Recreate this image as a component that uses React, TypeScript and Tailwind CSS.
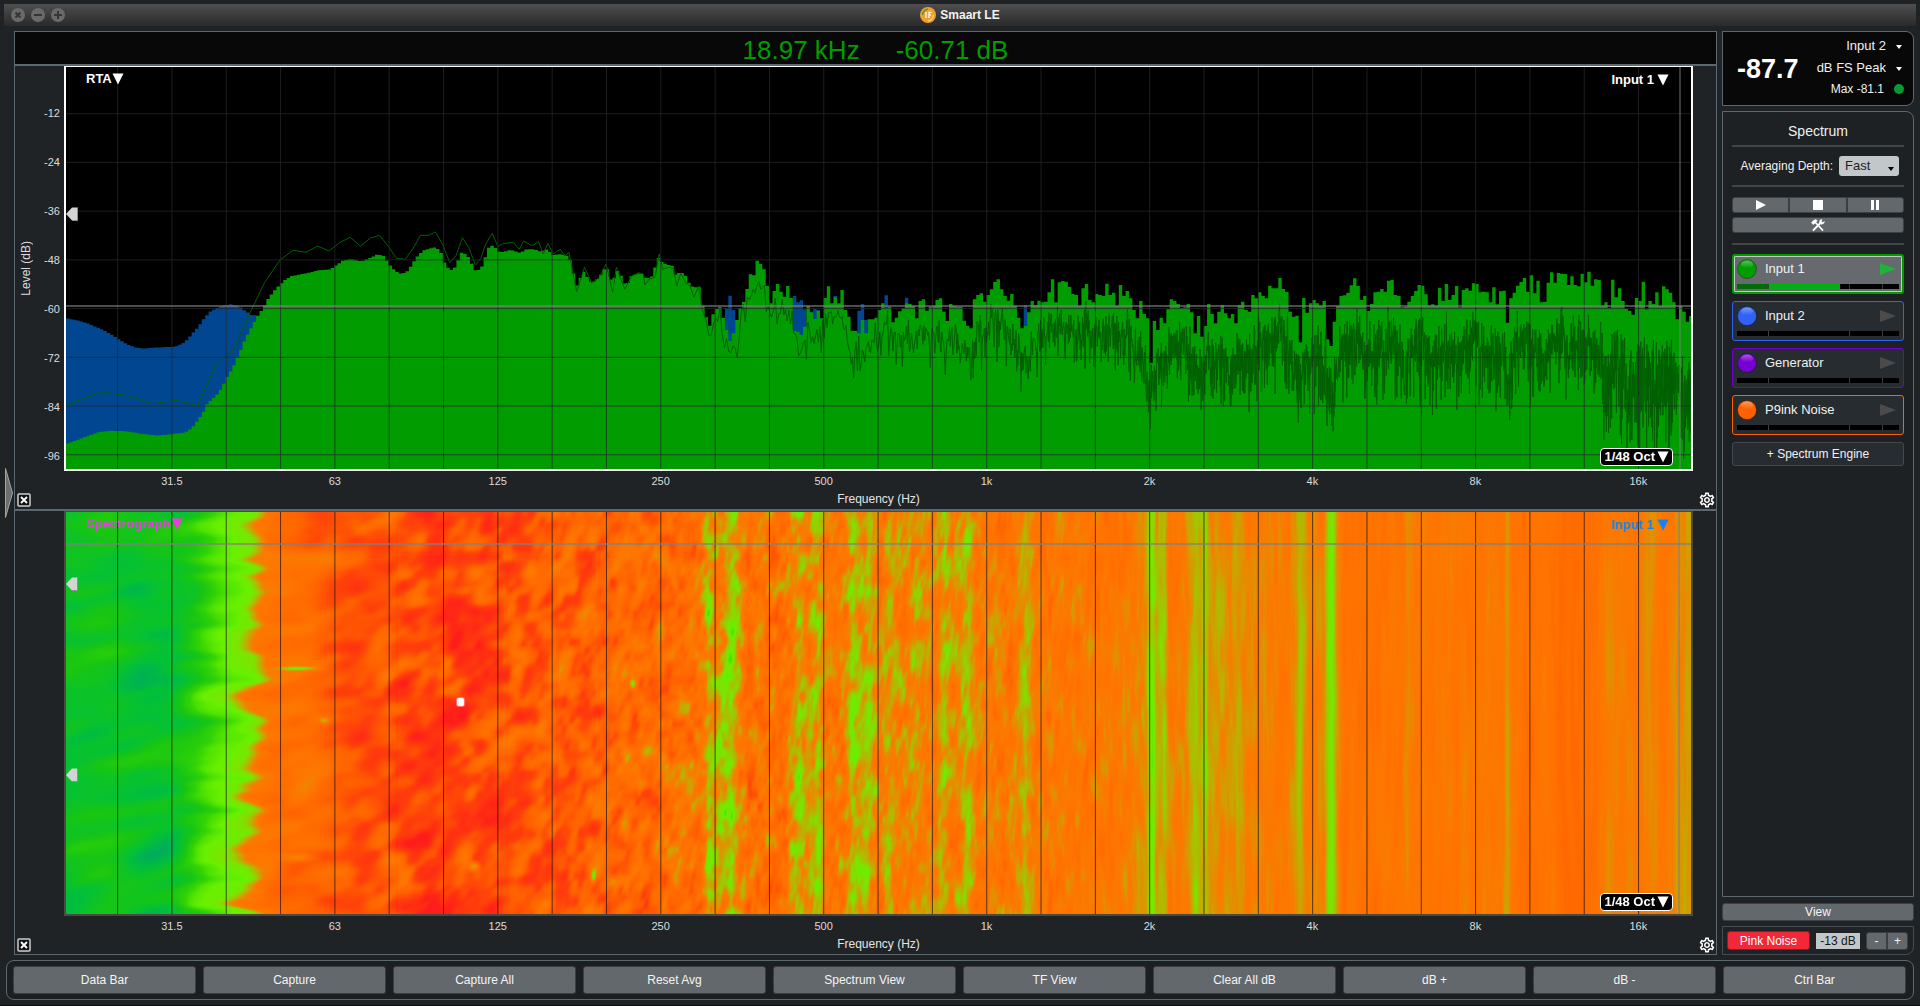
import { useEffect, useMemo, useRef } from "react";
import type { ReactNode } from "react";
import { MdOutlineSettings } from "react-icons/md";

const PLOT_W = 1625;
const PLOT_H = 402;
const BAR_W = 3.395;

type Point = [number, number];

/* ---------- spectrum data, in plot units (x 0..1625, y 0..402) ---------- */

const lowX = (v: number) => v / 2.45 - 66;
const levelY = (v: number) => v / 3 + 173;

const GREEN_LOW: Point[] = [
  [163, 612], [190, 600], [215, 588], [240, 577], [270, 572], [310, 574], [345, 581], [385, 587], [420, 583], [455, 577],
  [470, 565], [485, 540], [497, 520], [505, 495], [520, 478], [535, 460], [545, 440], [555, 415], [570, 385], [585, 345],
  [600, 300], [615, 265], [630, 230], [645, 205], [655, 180], [670, 155], [685, 135], [700, 118], [715, 108], [750, 100],
  [780, 91], [810, 88], [825, 75], [840, 62], [860, 57], [885, 64], [905, 55], [925, 43], [940, 48], [948, 62],
  [958, 80], [970, 95], [985, 102], [1000, 92], [1012, 68], [1025, 45], [1040, 30], [1065, 22], [1078, 30], [1090, 70],
  [1100, 88], [1110, 92], [1120, 68], [1130, 38], [1145, 45], [1155, 70], [1165, 93], [1178, 88], [1187, 60], [1195, 25],
  [1207, 16], [1215, 25], [1225, 38], [1250, 30], [1275, 38], [1290, 28], [1310, 28], [1325, 35], [1340, 28], [1355, 45],
  [1375, 42], [1395, 50], [1403, 90], [1413, 138], [1425, 105], [1432, 92], [1440, 115], [1450, 130], [1468, 112], [1485, 78],
  [1492, 98], [1501, 138], [1508, 95], [1517, 92], [1525, 118], [1534, 140], [1546, 108], [1565, 100], [1575, 103], [1582, 118],
  [1600, 107], [1607, 72], [1615, 48], [1623, 70], [1636, 74], [1650, 78], [1655, 105], [1664, 98], [1678, 100], [1683, 122],
  [1697, 140], [1711, 143], [1717, 138],
];

const BLUE_LOW: Point[] = [
  [163, 235], [185, 240], [210, 248], [250, 268], [275, 285], [290, 297], [310, 312], [330, 322], [350, 326], [375, 323],
  [430, 320], [445, 312], [460, 298], [475, 275], [485, 262], [500, 235], [515, 215], [530, 205], [545, 197], [565, 193],
  [585, 198], [600, 212], [615, 225], [640, 228],
];

const TRACE_LOW: Point[] = [
  [163, 495], [248, 455], [315, 467], [375, 491], [432, 481], [484, 497], [528, 377], [573, 327], [610, 225], [648, 128],
  [686, 60], [718, 31], [750, 37], [778, 18], [806, 33], [832, 8], [858, -8], [883, 18], [908, -6], [930, -14],
  [952, 20], [971, 55], [993, 58], [1012, 25], [1030, -14], [1050, -14], [1067, -24], [1085, 15], [1102, 68], [1117, 48],
  [1133, -7], [1148, 22], [1165, 75], [1178, 55], [1190, 12], [1206, -20], [1220, 20], [1232, 11], [1258, 7], [1272, 28],
  [1283, 3], [1300, 15], [1308, 15], [1319, 4], [1331, 42], [1342, 10], [1355, 42], [1373, 28], [1384, 48], [1394, 37],
  [1403, 95], [1413, 155], [1432, 82], [1450, 130], [1468, 112], [1485, 72], [1501, 157], [1510, 82], [1531, 148], [1548, 108],
  [1565, 98], [1576, 102], [1580, 135], [1590, 118], [1605, 112], [1615, 42], [1624, 88], [1638, 82], [1650, 85], [1658, 138],
  [1668, 100], [1680, 128], [1690, 135], [1700, 172], [1712, 138], [1720, 205], [1729, 238],
];

const HIGH_START = 635.2;
const GREEN_HIGH = [
  198, 232, 257, 223, 207, 201, 234, 270, 303, 280, 240, 204, 186, 147, 103, 106, 62, 72, 88, 138, 190, 153, 132, 155, 170,
  138, 174, 273, 276, 284, 260, 198, 217, 237, 212, 235, 174, 139, 190, 172, 190, 150, 210, 230, 272, 273, 280, 240, 280,
  238, 238, 233, 210, 190, 205, 200, 247, 233, 214, 205, 190, 192, 198, 235, 183, 178, 212, 200, 198, 180, 175, 215, 243,
  192, 198, 200, 200, 242, 257, 265, 178, 165, 160, 185, 165, 148, 126, 118, 148, 168, 182, 162, 198, 233, 265, 258, 217,
  183, 195, 182, 187, 185, 157, 118, 187, 127, 123, 125, 140, 162, 165, 198, 145, 132, 180, 187, 162, 165, 168, 131, 165,
  158, 198, 135, 168, 153, 175, 210, 235, 183, 222, 235, 368,
  243, 270, 233, 250, 208, 178, 183, 192, 204, 202, 192, 217, 280, 228, 290, 258, 192, 222, 250, 215, 195, 220, 235, 222,
  250, 196, 185, 210, 215, 165, 175, 157, 168, 175, 137, 145, 145, 114, 147, 156, 215, 230, 227, 307, 174, 218, 190, 180,
  190, 198, 183, 298, 318, 245, 198, 168, 166, 158, 136, 115, 138, 180, 168, 213, 192, 157, 155, 147, 155, 122, 120, 165,
  168, 202, 200, 185, 168, 153, 135, 137, 163, 197, 193, 198, 143, 183, 132, 180, 165, 138, 202, 150, 145, 152, 130, 132,
  157, 155, 157, 187, 142, 193, 154, 152, 248, 175, 158, 137, 126, 114, 155, 106, 160, 122, 187, 185, 128, 97, 128, 99,
  101, 102, 135, 109, 135, 139, 101, 127, 95, 137, 118, 120, 197, 187, 203, 119, 172, 145, 183, 207, 212, 224, 174, 183,
  125, 208, 183, 192, 157, 198, 139, 148, 158, 187, 238, 198, 215, 245, 228,
];

/* bar index within GREEN_HIGH -> level of the second input behind it */
const BLUE_HIGH: Point[] = [
  [7, 205], [8, 167], [9, 210], [27, 168], [28, 187], [29, 181], [30, 208], [32, 217], [33, 207], [34, 210], [39, 168],
  [46, 212], [47, 192], [48, 240], [54, 166], [60, 173], [95, 195],
];

function sample(points: Point[], x: number): number {
  if (x <= points[0][0]) return points[0][1];
  for (let i = 1; i < points.length; i++) {
    const [x1, y1] = points[i];
    if (x <= x1) {
      const [x0, y0] = points[i - 1];
      return y0 + ((y1 - y0) * (x - x0)) / (x1 - x0);
    }
  }
  return points[points.length - 1][1];
}

function makeRandom(seed: number) {
  let s = seed;
  return () => {
    s = (s * 1664525 + 1013904223) >>> 0;
    return (s + 0.5) / 4294967296;
  };
}

function steps(points: Point[], from: number, to: number): string {
  let d = "";
  for (let x = from; x < to - 0.5; x += BAR_W) {
    const y = levelY(sample(points, (x + BAR_W / 2 + 66) * 2.45));
    d += `V${y.toFixed(1)}H${Math.min(x + BAR_W, to).toFixed(2)}`;
  }
  return d;
}

function buildSpectrum() {
  let green = `M0 ${PLOT_H}` + steps(GREEN_LOW, 0, HIGH_START);
  GREEN_HIGH.forEach((v, i) => {
    green += `V${levelY(v).toFixed(1)}H${(HIGH_START + (i + 1) * BAR_W).toFixed(2)}`;
  });
  green += `H${PLOT_W}V${PLOT_H}Z`;

  let blue = `M0 ${PLOT_H}` + steps(BLUE_LOW, 0, 192) + `V${PLOT_H}Z`;
  for (const [i, v] of BLUE_HIGH) {
    const x = HIGH_START + i * BAR_W;
    blue += `M${x.toFixed(2)} ${PLOT_H}V${levelY(v).toFixed(1)}h${BAR_W}V${PLOT_H}Z`;
  }

  const random = makeRandom(48);
  let trace = TRACE_LOW.map(([x, y], i) => `${i ? "L" : "M"}${lowX(x).toFixed(1)} ${levelY(y).toFixed(1)}`).join("");
  let x = HIGH_START + 5;
  while (x < PLOT_W) {
    const bar = (x - HIGH_START) / BAR_W;
    const i = Math.min(GREEN_HIGH.length - 2, Math.max(1, Math.floor(bar)));
    const top = (GREEN_HIGH[i - 1] + 2 * GREEN_HIGH[i] + GREEN_HIGH[i + 1]) / 4;
    const t = (x - HIGH_START) / (PLOT_W - HIGH_START);
    const offset = 6 + 168 * Math.pow(t, 0.66) + (x > 1535 ? 30 : 0);
    const spread = 1.8 + 1.9 * Math.min(1, t * 1.5) + (x > 1535 ? 1.4 : 0);
    const db = -10 * Math.log10(-Math.log(random()) + 0.02);
    const y = Math.min(392, levelY(top + offset + (db + 1.5) * -1 * spread * -3.2));
    trace += `L${x.toFixed(2)} ${Math.max(levelY(GREEN_HIGH[i]) + 2, y).toFixed(1)}`;
    x += Math.max(0.28, 2.4 * Math.pow(0.5, (x - HIGH_START) / 163));
  }
  return { green, blue, trace };
}

const GRID_X = Array.from({ length: 29 }, (_, i) => 51.6 + i * 54.32);
const GRID_Y = Array.from({ length: 8 }, (_, i) => 46.7 + i * 48.72);

function SpectrumChart() {
  const { green, blue, trace } = useMemo(buildSpectrum, []);
  return (
    <svg viewBox={`0 0 ${PLOT_W} ${PLOT_H}`} preserveAspectRatio="none" className="absolute inset-0 block h-full w-full bg-black">
      <path d={blue} fill="#004690" />
      <path d={green} fill="#009c00" />
      <path d={trace} fill="none" stroke="#006000" strokeWidth="1" strokeLinejoin="bevel" />
      <g stroke="#26282e" strokeOpacity="0.72">
        {GRID_X.map((x) => <line key={x} x1={x} x2={x} y1="0" y2={PLOT_H} />)}
        {GRID_Y.map((y) => <line key={y} x1="0" x2={PLOT_W} y1={y} y2={y} />)}
      </g>
      <path d={`M0 239H${PLOT_W}`} stroke="#808080" strokeOpacity="0.6" strokeWidth="2" />
      <path d={`M1614 0V${PLOT_H}`} stroke="#808080" strokeOpacity="0.6" strokeWidth="1.5" />
    </svg>
  );
}

/* ---------- spectrograph ---------- */

const COLUMN_LEVEL: Point[] = [
  [66, 0.15], [110, 0.17], [140, 0.14], [172, 0.15], [188, 0.22], [205, 0.34], [218, 0.39], [230, 0.41], [242, 0.44], [250, 0.53],
  [258, 0.62], [280, 0.67], [340, 0.73], [390, 0.77], [430, 0.88], [455, 0.82], [500, 0.81], [560, 0.74], [620, 0.69],
  [680, 0.67], [700, 0.62], [708, 0.51], [715, 0.57], [722, 0.52], [731, 0.46], [738, 0.55], [748, 0.66], [785, 0.64],
  [793, 0.54], [798, 0.5], [808, 0.56], [818, 0.5], [825, 0.62], [844, 0.61], [852, 0.48], [860, 0.54], [868, 0.5],
  [880, 0.6], [888, 0.54], [896, 0.59], [925, 0.59], [933, 0.61], [944, 0.52], [952, 0.6], [962, 0.54], [969, 0.5],
  [976, 0.61], [1012, 0.62], [1020, 0.57], [1025, 0.5], [1030, 0.55], [1036, 0.62], [1130, 0.61], [1146, 0.54],
  [1150, 0.44], [1153, 0.44], [1156, 0.53], [1164, 0.51], [1169, 0.6], [1186, 0.59], [1195, 0.51], [1200, 0.54],
  [1205, 0.47], [1209, 0.55], [1222, 0.56], [1236, 0.54], [1250, 0.59], [1284, 0.61], [1294, 0.56], [1299, 0.49],
  [1302, 0.52], [1308, 0.59], [1323, 0.6], [1328, 0.45], [1332, 0.44], [1337, 0.58], [1344, 0.64], [1400, 0.63],
  [1406, 0.59], [1420, 0.63], [1460, 0.61], [1502, 0.61], [1507, 0.53], [1512, 0.63], [1530, 0.66], [1545, 0.62],
  [1560, 0.68], [1595, 0.66], [1605, 0.59], [1625, 0.59], [1634, 0.62], [1650, 0.58], [1665, 0.62], [1678, 0.57], [1691, 0.53],
];

const CELL_WIDTH: Point[] = [[66, 46], [230, 36], [400, 19], [560, 11], [750, 6], [1000, 5], [1300, 4], [1691, 4]];
const CELL_HEIGHT: Point[] = [[66, 16], [230, 15], [400, 15], [700, 14], [1000, 18], [1120, 30], [1300, 60], [1691, 90]];
const FINE_DETAIL: Point[] = [[66, 0.15], [300, 0.25], [500, 0.4], [700, 0.5], [1691, 0.5]];
const NOISE_DEPTH: Point[] = [[66, 0.17], [180, 0.16], [215, 0.06], [250, 0.08], [290, 0.16], [420, 0.32], [620, 0.23], [710, 0.2], [1000, 0.14], [1130, 0.09], [1250, 0.07], [1691, 0.05]];

const SPOTS = [
  { x: 298, y: 156, rx: 18, ry: 2, v: -0.22 },
  { x: 474, y: 354, rx: 6, ry: 5, v: -0.32 },
  { x: 298, y: 345, rx: 16, ry: 4, v: -0.17 },
  { x: 593, y: 364, rx: 3, ry: 7, v: -0.26 },
  { x: 632, y: 171, rx: 3, ry: 5, v: -0.26 },
  { x: 324, y: 208, rx: 5, ry: 3, v: -0.15 },
];

const PALETTE: [number, number, number, number][] = [
  [0, 0, 168, 100], [0.1, 2, 192, 56], [0.2, 24, 198, 18], [0.3, 52, 212, 4], [0.4, 104, 240, 0], [0.45, 126, 226, 0],
  [0.52, 188, 176, 0], [0.59, 248, 124, 0], [0.63, 255, 116, 0], [0.73, 255, 98, 0], [0.83, 255, 64, 10], [1, 255, 28, 26],
];

function hash(ix: number, iy: number): number {
  let h = (ix * 374761393 + iy * 668265263) | 0;
  h = Math.imul(h ^ (h >>> 13), 1274126177);
  return ((h ^ (h >>> 16)) >>> 0) / 4294967296;
}

function noise(x: number, y: number): number {
  const ix = Math.floor(x);
  const iy = Math.floor(y);
  const fx = x - ix;
  const fy = y - iy;
  const sx = fx * fx * (3 - 2 * fx);
  const sy = fy * fy * (3 - 2 * fy);
  const a = hash(ix, iy) * (1 - sx) + hash(ix + 1, iy) * sx;
  const b = hash(ix, iy + 1) * (1 - sx) + hash(ix + 1, iy + 1) * sx;
  return a * (1 - sy) + b * sy - 0.5;
}

function paintSpectrograph(canvas: HTMLCanvasElement) {
  const ctx = canvas.getContext("2d");
  if (!ctx) return;
  const image = ctx.createImageData(PLOT_W, PLOT_H);
  let u = 0;
  for (let px = 0; px < PLOT_W; px++) {
    const gx = px + 66;
    u += 1 / sample(CELL_WIDTH, gx);
    const ch = sample(CELL_HEIGHT, gx);
    const depth = sample(NOISE_DEPTH, gx);
    const fine = sample(FINE_DETAIL, gx);
    const edge = gx > 160 && gx < 310 ? Math.sin(((gx - 160) / 150) * Math.PI) : 0;
    const bumpy = gx < 1100;
    for (let y = 0; y < PLOT_H; y++) {
      const drift = gx / 300;
      const shift = edge ? (noise(3.5 + drift, y / 15) * 40 + noise(9.5 + drift, y / 8) * 26) * edge : 0;
      const base = edge ? sample(COLUMN_LEVEL, gx + shift) : sample(COLUMN_LEVEL, gx);
      const slant = bumpy ? y * 0.02 : 0;
      const n =
        noise(u + slant, y / ch + 40) * 0.75 +
        noise(u * 1.9 + slant * 2 + 31, y / (ch * 0.6) + 90) * fine +
        noise(u * 0.5 + 77, y / (ch * 1.7) + 12) * 0.6;
      let v = base + n * depth * 1.15;
      if (bumpy) {
        for (const s of SPOTS) {
          const dx = (px + 66 - s.x) / s.rx;
          const dy = (y - s.y) / s.ry;
          const r = dx * dx + dy * dy;
          if (r < 6) v += s.v * Math.exp(-r);
        }
      }
      v = Math.max(0, Math.min(0.999, v));
      let k = 1;
      while (PALETTE[k][0] < v) k++;
      const p = PALETTE[k - 1];
      const q = PALETTE[k];
      const t = (v - p[0]) / (q[0] - p[0]);
      const o = (y * PLOT_W + px) * 4;
      image.data[o] = p[1] + (q[1] - p[1]) * t;
      image.data[o + 1] = p[2] + (q[2] - p[2]) * t;
      image.data[o + 2] = p[3] + (q[3] - p[3]) * t;
      image.data[o + 3] = 255;
    }
  }
  ctx.putImageData(image, 0, 0);
}

function SpectrographChart() {
  const ref = useRef<HTMLCanvasElement>(null);
  useEffect(() => {
    if (ref.current) paintSpectrograph(ref.current);
  }, []);
  return (
    <>
      <canvas ref={ref} width={PLOT_W} height={PLOT_H} className="absolute inset-0 block h-full w-full bg-[#ff7800]" />
      <svg viewBox={`0 0 ${PLOT_W} ${PLOT_H}`} preserveAspectRatio="none" className="absolute inset-0 block h-full w-full">
        <rect x="390" y="185" width="9" height="10" rx="3" fill="#ff7070" />
        <rect x="391" y="186" width="7" height="8" rx="2" fill="#ffffff" />
        <g stroke="#1c1408" strokeOpacity="0.72">
          {GRID_X.map((x) => <line key={x} x1={x} x2={x} y1="0" y2={PLOT_H} />)}
        </g>
        <path d={`M0 32H${PLOT_W}`} stroke="#808080" strokeOpacity="0.7" strokeWidth="2" />
        <path d={`M1613 0V${PLOT_H}`} stroke="#808080" strokeOpacity="0.7" strokeWidth="1.5" />
      </svg>
    </>
  );
}

/* ---------- plot panels ---------- */

const FREQS = ["31.5", "63", "125", "250", "500", "1k", "2k", "4k", "8k", "16k"];
const LEVELS = ["-12", "-24", "-36", "-48", "-60", "-72", "-84", "-96"];

function Down() {
  return (
    <svg viewBox="0 0 12 12" className="size-3">
      <path d="M0.5 0.5H11.5L6 11.5Z" fill="currentColor" />
    </svg>
  );
}

function Handle({ label, className }: { label: string; className: string }) {
  return (
    <button type="button" aria-label={label} className={`absolute left-0 h-[14px] w-3 -translate-y-1/2 ${className}`}>
      <svg viewBox="0 0 12 14" className="block h-full w-full">
        <path d="M0 7L6 0.5H11.5V13.5H6Z" fill="#d4d4d4" />
        <path d="M11.5 0.5V13.5H6" fill="none" stroke="#8f8f8f" />
      </svg>
    </button>
  );
}

interface PlotProps {
  name: string;
  frameClass: string;
  nameClass: string;
  inputClass: string;
  levels: boolean;
  handles: ReactNode;
  children: ReactNode;
}

function PlotPanel({ name, frameClass, nameClass, inputClass, levels, handles, children }: PlotProps) {
  return (
    <section aria-label={name} className="flex min-h-0 flex-1 flex-col">
      <div className="flex min-h-0 flex-1">
        <div className="flex w-[49px] shrink-0 text-[11px] text-[#dcdcdc]">
          {levels && (
            <>
              <div className="flex w-[21px] items-center justify-center text-xs">
                <span className="rotate-180 whitespace-nowrap [writing-mode:vertical-rl]">Level (dB)</span>
              </div>
              <div className="flex flex-1 flex-col pr-1">
                <div className="h-[5.5%] shrink-0" />
                {LEVELS.map((l) => (
                  <div key={l} className="flex h-[12.1%] shrink-0 items-center justify-end">{l}</div>
                ))}
              </div>
            </>
          )}
        </div>
        <div className={`relative min-w-0 flex-1 border-2 border-t ${frameClass}`}>
          {children}
          <button type="button" className={`absolute left-5 top-1 flex h-4 items-center text-[13px] font-bold ${nameClass}`}>
            {name}
            <Down />
          </button>
          <button type="button" className={`absolute right-[22px] top-[5px] flex h-4 items-center gap-[3px] text-[13px] font-bold ${inputClass}`}>
            Input 1
            <Down />
          </button>
          <button type="button" className="absolute bottom-[3px] right-[18px] flex h-[18px] items-center gap-[2px] rounded border border-white bg-black px-[3px] text-[13px] font-bold text-white">
            1/48 Oct
            <Down />
          </button>
          {handles}
        </div>
        <div className="w-[23px] shrink-0" />
      </div>
      <div className="relative h-[38px] shrink-0 pl-[51px] pr-[25px]">
        <div className="ml-[1.5%] flex h-5 items-center text-[11px] text-[#dcdcdc]">
          {FREQS.map((f) => (
            <span key={f} className="w-[10.18%] shrink-0 text-center">{f}</span>
          ))}
        </div>
        <div className="text-center text-xs leading-4 text-[#e4e4e4]">Frequency (Hz)</div>
        <button type="button" aria-label="Close plot" className="absolute bottom-[2px] left-[2px] size-[14px]">
          <svg viewBox="0 0 14 14" className="block size-full">
            <rect x="1" y="1" width="12" height="12" rx="1" fill="#101213" stroke="#d0d0d0" strokeWidth="1.5" />
            <path d="M4 4L10 10M10 4L4 10" stroke="#ffffff" strokeWidth="1.8" />
          </svg>
        </button>
        <button type="button" aria-label="Plot settings" className="absolute bottom-0 right-0 text-white">
          <MdOutlineSettings size={18} />
        </button>
      </div>
    </section>
  );
}

/* ---------- side bar ---------- */

const BUTTON = "border border-[#3b4045] bg-[#63686d] text-[#f4f4f4]";

function Caret({ className }: { className: string }) {
  return (
    <svg viewBox="0 0 6 4" className={`pointer-events-none h-1 w-[6px] ${className}`}>
      <path d="M0 0H6L3 4Z" fill="currentColor" />
    </svg>
  );
}

function MeterSelect({ label, value }: { label: string; value: string }) {
  return (
    <div className="relative flex items-center">
      <select aria-label={label} defaultValue={value} className="h-[18px] w-[100px] appearance-none bg-transparent pr-[18px] text-[13px] text-[#f0f0f0] [text-align-last:right]">
        <option>{value}</option>
      </select>
      <Caret className="absolute right-[2px] top-[9px] text-white" />
    </div>
  );
}

interface Engine {
  name: string;
  color: string;
  card: string;
  play: string;
  active: boolean;
}

const ENGINES: Engine[] = [
  { name: "Input 1", color: "#009c00", card: "border-2 border-[#009c00] bg-[#66696d] p-[3px] shadow-[inset_0_0_0_1px_#c4c8c8]", play: "#1db437", active: true },
  { name: "Input 2", color: "#2f62f5", card: "border border-[#2f62f5] bg-[#272c30] p-1", play: "#4b4b4b", active: false },
  { name: "Generator", color: "#7600d0", card: "border border-[#7600d0] bg-[#272c30] p-1", play: "#4b4b4b", active: false },
  { name: "P9ink Noise", color: "#ff6000", card: "border border-[#ff6000] bg-[#272c30] p-1", play: "#4b4b4b", active: false },
];

function EngineCard({ engine, index }: { engine: Engine; index: number }) {
  return (
    <button type="button" className={`flex h-10 w-full flex-col rounded-[3px] text-left ${engine.card}`}>
      <span className="flex h-5 w-full items-center">
        <svg viewBox="0 0 20 20" className="size-5 shrink-0">
          <defs>
            <linearGradient id={`shine-${index}`} x1="0" y1="0" x2="0" y2="1">
              <stop offset="0" stopColor="#ffffff" stopOpacity="0.35" />
              <stop offset="1" stopColor="#ffffff" stopOpacity="0" />
            </linearGradient>
          </defs>
          <circle cx="10" cy="10" r="9.5" fill={engine.color} stroke="#000000" strokeOpacity="0.3" />
          <ellipse cx="10" cy="5.5" rx="6" ry="4" fill={`url(#shine-${index})`} />
        </svg>
        <span className="flex-1 pl-2 text-[13px] text-[#f0f0f0]">{engine.name}</span>
        <svg viewBox="0 0 16 12" className="mr-[3px] h-3 w-4">
          <path d="M0 0L16 6L0 12Z" fill={engine.play} />
        </svg>
      </span>
      <span className="mt-[5px] flex h-[5px] w-full bg-black">
        <span className={`h-full w-1/5 border-r border-[#3a3f42] ${engine.active ? "bg-[#006a06]" : ""}`} />
        <span className="flex h-full w-1/2 border-r border-[#3a3f42]">
          {engine.active && <span className="h-full w-[88%] bg-[#00b010]" />}
        </span>
        <span className="h-full w-1/5 border-r border-[#3a3f42]" />
      </span>
    </button>
  );
}

function Rule() {
  return <div className="h-[2px] shrink-0 bg-[#3f464b]" />;
}

function SideBar() {
  return (
    <aside className="flex w-48 shrink-0 flex-col">
      <div className="flex h-[75px] shrink-0 items-center justify-between rounded-r-lg border border-[#5c6870] bg-[#080808] pl-[14px] pr-[9px]">
        <div className="pt-[2px] text-[27px] font-bold leading-none text-white">-87.7</div>
        <div className="flex flex-col items-end gap-1 pb-[3px]">
          <MeterSelect label="Meter input" value="Input 2" />
          <MeterSelect label="Meter scale" value="dB FS Peak" />
          <div className="flex h-[18px] items-center gap-[10px] text-xs text-[#f0f0f0]">
            Max -81.1
            <span className="size-[10px] rounded-full bg-[#059a34]" />
          </div>
        </div>
      </div>

      <div className="mt-[5px] flex min-h-0 flex-1 flex-col rounded-tr-lg border border-[#5c6870] bg-[#1d2124] px-[9px]">
        <h2 className="flex h-[33px] shrink-0 items-center justify-center pt-[5px] text-sm text-[#f0f0f0]">Spectrum</h2>
        <Rule />
        <div className="flex h-[38px] shrink-0 items-center justify-end gap-[6px] pr-[5px]">
          <label htmlFor="avg-depth" className="text-xs text-[#f0f0f0]">Averaging Depth:</label>
          <div className="relative flex">
            <select id="avg-depth" defaultValue="Fast" className="h-5 w-[60px] appearance-none rounded-[3px] bg-[#c2c8c9] px-[6px] text-[13px] text-[#1b1f22]">
              <option>Fast</option>
            </select>
            <Caret className="absolute right-[5px] top-[11px] text-black" />
          </div>
        </div>
        <Rule />
        <div className="mt-[10px] flex shrink-0">
          <button type="button" aria-label="Play" className={`flex h-4 flex-1 items-center justify-center rounded-l-[3px] ${BUTTON}`}>
            <svg viewBox="0 0 10 10" className="size-[10px]"><path d="M0 0L10 5L0 10Z" fill="#fff" /></svg>
          </button>
          <button type="button" aria-label="Stop" className={`flex h-4 flex-1 items-center justify-center ${BUTTON}`}>
            <svg viewBox="0 0 10 10" className="size-[10px]"><path d="M0 0H10V10H0Z" fill="#fff" /></svg>
          </button>
          <button type="button" aria-label="Pause" className={`flex h-4 flex-1 items-center justify-center rounded-r-[3px] ${BUTTON}`}>
            <svg viewBox="0 0 10 10" className="size-[10px]"><path d="M1 0H4V10H1ZM6 0H9V10H6Z" fill="#fff" /></svg>
          </button>
        </div>
        <button type="button" aria-label="Spectrum options" className={`mb-[10px] mt-1 flex h-4 shrink-0 items-center justify-center rounded-[3px] ${BUTTON}`}>
          <svg viewBox="0 0 28 24" className="h-3 w-[14px]" fill="none" stroke="#ffffff">
            <path d="M8 6L23 22" strokeWidth="3.6" strokeLinecap="round" />
            <path d="M1 8Q3 2 10 1L12.500 3.500L5 11Z" fill="#ffffff" strokeWidth="1" />
            <path d="M5 22L20 7" strokeWidth="3.6" strokeLinecap="round" />
            <path d="M22 0.500Q16 2 17 7.500L20 10.500Q26 11 27 5L23.500 7L20.500 4.500Z" fill="#ffffff" strokeWidth="1" />
          </svg>
        </button>
        <Rule />
        <div className="mt-[9px] flex flex-col gap-[7px]">
          {ENGINES.map((e, i) => <EngineCard key={e.name} engine={e} index={i} />)}
          <button type="button" className="h-6 rounded-[3px] border border-[#42484d] bg-[#272c30] text-xs text-[#f0f0f0]">+ Spectrum Engine</button>
        </div>
      </div>

      <button type="button" className={`mt-[6px] h-[18px] shrink-0 rounded-[3px] text-xs ${BUTTON}`}>View</button>

      <div className="mt-[5px] flex h-[29px] shrink-0 items-center rounded-br-lg border border-[#454c52] pl-1 pr-[5px]">
        <button type="button" className="h-[19px] w-[83px] rounded-[3px] border border-[#b00d18] bg-[#f02838] text-xs text-white">Pink Noise</button>
        <input aria-label="Generator level" defaultValue="-13 dB" className="ml-[6px] h-4 w-11 bg-[#c2c8c9] text-center text-xs text-[#15181a]" />
        <div className="ml-auto flex">
          <button type="button" aria-label="Lower level" className={`h-[18px] w-[21px] rounded-l-[3px] text-xs leading-none ${BUTTON}`}>-</button>
          <button type="button" aria-label="Raise level" className={`h-[18px] w-[21px] rounded-r-[3px] text-xs leading-none ${BUTTON}`}>+</button>
        </div>
      </div>
    </aside>
  );
}

/* ---------- window ---------- */

const COMMANDS = ["Data Bar", "Capture", "Capture All", "Reset Avg", "Spectrum View", "TF View", "Clear All dB", "dB +", "dB -", "Ctrl Bar"];

const WINDOW_BUTTONS = [
  { label: "Close", d: "M4.5 4.500L9.500 9.500M9.500 4.500L4.500 9.500" },
  { label: "Minimize", d: "M3 7H11" },
  { label: "Zoom", d: "M3 7H11M7 3V11" },
];

function TitleBar() {
  return (
    <header className="relative mx-1 mt-1 flex h-[22px] shrink-0 items-center justify-center bg-linear-to-b from-[#4f4f4f] to-[#2a2a2a]">
      <div className="absolute inset-y-0 left-[7px] flex items-center gap-[6px]">
        {WINDOW_BUTTONS.map((b) => (
          <button key={b.label} type="button" aria-label={b.label}>
            <svg viewBox="0 0 14 14" className="block size-[14px]">
              <circle cx="7" cy="7" r="7" fill="#6a6a6a" />
              <path d={b.d} stroke="#353535" strokeWidth="2" />
            </svg>
          </button>
        ))}
      </div>
      <svg viewBox="0 0 16 16" className="mr-1 size-4">
        <circle cx="8" cy="8" r="8" fill="#f0a02c" />
        <path d="M2.500 8Q3 3 8 2" fill="none" stroke="#2f8a50" strokeWidth="1.2" />
        <path d="M13.500 8Q13 13 8 14" fill="none" stroke="#ffd98a" strokeWidth="1.2" />
        <path d="M6 5V11M9 11V5.500H11.500M9 8H11" fill="none" stroke="#fff4de" strokeWidth="1.4" />
      </svg>
      <h1 className="text-xs font-bold text-[#f2f2f2]">Smaart LE</h1>
    </header>
  );
}

export default function App() {
  return (
    <div className="flex h-screen min-h-[720px] flex-col overflow-hidden border-b border-[#0c0f11] bg-[#1f2326] font-['Liberation_Sans',Arial,sans-serif]">
      <TitleBar />

      <div className="mt-[5px] flex min-h-0 flex-1 pr-[6px]">
        <div className="flex w-[14px] shrink-0 items-center justify-end">
          <button type="button" aria-label="Show data bar" className="mr-px">
            <svg viewBox="0 0 8 50" className="block h-[50px] w-2">
              <path d="M0.500 0.500L7.500 25L0.500 49.500Z" fill="#6b6f70" stroke="#a0a4a5" />
            </svg>
          </button>
        </div>

        <main className="mr-[5px] flex min-w-0 flex-1 flex-col border border-[#5c6870]">
          <div className="flex h-[34px] shrink-0 items-center justify-center gap-9 border-b-2 border-[#5c6870] bg-[#080808] pl-[20px] pt-1 text-[26px] leading-none text-[#009c00]">
            <span>18.97 kHz</span>
            <span>-60.71 dB</span>
          </div>
          <PlotPanel
            name="RTA"
            frameClass="border-white"
            nameClass="text-white"
            inputClass="text-white"
            levels
            handles={<Handle label="Threshold" className="top-[36.500%]" />}
          >
            <SpectrumChart />
          </PlotPanel>
          <div className="h-[2px] shrink-0 bg-[#5c6870]" />
          <PlotPanel
            name="Spectrograph"
            frameClass="border-[#4a4a42]"
            nameClass="text-[#ea3be4]"
            inputClass="text-[#1484f4]"
            levels={false}
            handles={
              <>
                <Handle label="Upper range" className="top-[18%]" />
                <Handle label="Lower range" className="top-[65.500%]" />
              </>
            }
          >
            <SpectrographChart />
          </PlotPanel>
        </main>

        <SideBar />
      </div>

      <nav aria-label="Commands" className="mx-[6px] mb-[5px] mt-[5px] flex h-10 shrink-0 gap-[7px] rounded-lg border border-[#5c6870] bg-[#1b1f22] py-[5px] pl-[6px] pr-[7px]">
        {COMMANDS.map((c) => (
          <button key={c} type="button" className={`min-w-0 flex-1 rounded-[3px] text-xs ${BUTTON}`}>{c}</button>
        ))}
      </nav>
    </div>
  );
}
